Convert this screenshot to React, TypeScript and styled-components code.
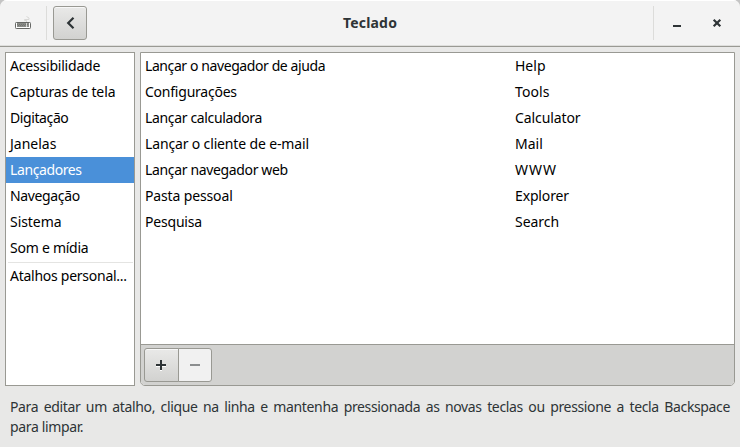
import React from "react";
import styled, { createGlobalStyle } from "styled-components";

const GlobalStyle = createGlobalStyle`
  * { box-sizing: border-box; }
  body { margin: 0; background: #c4c4c4; overflow: hidden; }
`;

const Window = styled.div`
  display: flex;
  flex-direction: column;
  width: 740px;
  height: 447px;
  overflow: hidden;
  border-radius: 7px 7px 0 0;
  background: #e8e8e7;
  color: #000;
  font: 14px/20px "Noto Sans", "Open Sans", sans-serif;
`;

const HeaderBar = styled.header`
  display: flex;
  align-items: center;
  height: 47px;
  flex: none;
  padding: 0 6px 1px 0;
  background: #f3f3f3;
  border-bottom: 1px solid #999993;
  box-shadow: inset 0 1px #fff, inset 0 -1px #dededc;
`;

const AppIcon = styled.div`
  display: flex;
  align-items: center;
  justify-content: center;
  width: 46px;
  height: 32px;
`;

const Separator = styled.div<{ $end?: boolean }>`
  width: 1px;
  height: 34px;
  margin-right: ${(p) => (p.$end ? 0 : 6)}px;
  background: #dcdcda;
`;

const BackButton = styled.button`
  display: flex;
  align-items: center;
  justify-content: center;
  width: 34px;
  height: 34px;
  padding: 0;
  border: 1px solid #999993;
  border-radius: 3px;
  background: linear-gradient(#e9e9e8, #d2d2d0);
  box-shadow: inset 0 1px #f8f8f8;
`;

const Title = styled.h1`
  flex: 1;
  margin: 0;
  text-align: center;
  font-size: 14px;
  font-weight: 700;
  line-height: 20px;
  letter-spacing: 0.2px;
  color: #2e3436;
`;

const WindowButton = styled.button`
  display: flex;
  align-items: center;
  justify-content: center;
  width: 40px;
  height: 34px;
  padding: 0 0 0 6px;
  border: 0;
  background: none;
`;

const Content = styled.main`
  display: flex;
  gap: 5px;
  height: 334px;
  margin: 5px 5px 0;
`;

const Sidebar = styled.nav`
  width: 130px;
  flex: none;
  border: 1px solid #999993;
  background: #fff;
`;

const Row = styled.div<{ $selected?: boolean }>`
  display: flex;
  align-items: center;
  height: 26px;
  padding-left: 4px;
  white-space: nowrap;
  color: ${(p) => (p.$selected ? "#fff" : "#000")};
  background: ${(p) => (p.$selected ? "#4a90d9" : "transparent")};
`;

const Label = styled.span<{ $spacing?: number }>`
  letter-spacing: ${(p) => p.$spacing ?? 0}px;
`;

const Divider = styled.div`
  height: 1px;
  margin: 1px 1px 0 2px;
  background: #e4e4e2;
`;

const ShortcutPanel = styled.section`
  display: flex;
  flex: 1;
  flex-direction: column;
  overflow: hidden;
  border: 1px solid #999993;
  border-radius: 0 0 5px 5px;
  background: #fff;
`;

const ShortcutList = styled.div`
  flex: 1;
`;

const ShortcutRow = styled(Row)`
  display: grid;
  grid-template-columns: 370px 1fr;
`;

const Toolbar = styled.footer`
  display: flex;
  height: 41px;
  padding: 3px;
  border-top: 1px solid #999993;
  background: #d2d2d0;
`;

const ToolButton = styled.button`
  display: flex;
  align-items: center;
  justify-content: center;
  width: 35px;
  height: 34px;
  padding: 0 1px 0 0;
  border: 1px solid #999993;
  border-radius: 3px 0 0 3px;
  background: linear-gradient(#e9e9e8, #d2d2d0);
  box-shadow: inset 0 1px #f8f8f8;

  & + & { margin-left: -1px; padding: 0; width: 34px; border-radius: 0 3px 3px 0; }
  &:disabled { background: #f1f1f1; box-shadow: none; }
`;

const Hint = styled.p`
  width: 720px;
  margin: 11px 10px 0;
  color: #2e3436;
  text-align: justify;
  letter-spacing: -0.36px;
`;

const categories: [string, number][] = [
  ["Acessibilidade", -0.2],
  ["Capturas de tela", -0.12],
  ["Digitação", -0.4],
  ["Janelas", 0],
  ["Lançadores", -0.4],
  ["Navegação", -0.35],
  ["Sistema", -0.05],
  ["Som e mídia", -0.25],
];

const shortcuts: [string, number, string, number][] = [
  ["Lançar o navegador de ajuda", -0.41, "Help", 0],
  ["Configurações", -0.23, "Tools", 0.1],
  ["Lançar calculadora", -0.35, "Calculator", -0.1],
  ["Lançar o cliente de e-mail", -0.15, "Mail", 0],
  ["Lançar navegador web", -0.35, "WWW", 1],
  ["Pasta pessoal", -0.14, "Explorer", -0.15],
  ["Pesquisa", -0.2, "Search", -0.05],
];

const KeyboardIcon = () => (
  <svg width="16" height="16" viewBox="0 0 16 16" fill="none">
    <path d="M11.500 7V5.500H9.500V4.500L14 4.500V3L11.500 1.500" stroke="#d8d8d6" />
    <rect x=".5" y="7.500" width="15" height="6" rx=".8" fill="#fff" stroke="#666865" />
    <path d="M2 8h12v4H2z" fill="#8a8c88" />
    <path d="M2 9.500h12M3 10.500h10" stroke="#747672" strokeDasharray="1 1" />
    <path d="M11.500 8v4" stroke="#d6d6d4" />
  </svg>
);

export default function App() {
  return (
    <Window>
      <GlobalStyle />
      <HeaderBar>
        <AppIcon><KeyboardIcon /></AppIcon>
        <Separator />
        <BackButton aria-label="Voltar">
          <svg width="16" height="16" viewBox="0 0 16 16" fill="none">
            <path d="M11.500 2.700L6.200 8L11.500 13.300" stroke="#2e3436" strokeWidth="2.200" />
          </svg>
        </BackButton>
        <Title>Teclado</Title>
        <Separator $end />
        <WindowButton aria-label="Minimizar">
          <svg width="16" height="16"><path d="M4 10h8v2H4z" fill="#2e3436" /></svg>
        </WindowButton>
        <WindowButton aria-label="Fechar">
          <svg width="16" height="16"><path d="M4.700 4.700l6.600 6.600M11.300 4.700l-6.600 6.600" stroke="#2e3436" strokeWidth="2.200" /></svg>
        </WindowButton>
      </HeaderBar>
      <Content>
        <Sidebar>
          {categories.map(([name, spacing]) => (
            <Row key={name} $selected={name === "Lançadores"}>
              <Label $spacing={spacing}>{name}</Label>
            </Row>
          ))}
          <Divider />
          <Row><Label $spacing={-0.26}>Atalhos personal...</Label></Row>
        </Sidebar>
        <ShortcutPanel>
          <ShortcutList>
            {shortcuts.map(([name, nameSpacing, keyName, keySpacing]) => (
              <ShortcutRow key={name}>
                <Label $spacing={nameSpacing}>{name}</Label>
                <Label $spacing={keySpacing}>{keyName}</Label>
              </ShortcutRow>
            ))}
          </ShortcutList>
          <Toolbar>
            <ToolButton aria-label="Adicionar">
              <svg width="16" height="16">
                <path d="M7 4h2v4h4v2H9v4H7v-4H3V8h4z" fill="#fff" />
                <path d="M7 3h2v4h4v2H9v4H7V9H3V7h4z" fill="#2e3436" />
              </svg>
            </ToolButton>
            <ToolButton aria-label="Remover" disabled>
              <svg width="16" height="16"><path d="M3 7h10v2H3z" fill="#8b8e8f" /></svg>
            </ToolButton>
          </Toolbar>
        </ShortcutPanel>
      </Content>
      <Hint>
        Para editar um atalho, clique na linha e mantenha pressionada as novas teclas ou pressione a tecla Backspace para&nbsp;limpar.
      </Hint>
    </Window>
  );
}
